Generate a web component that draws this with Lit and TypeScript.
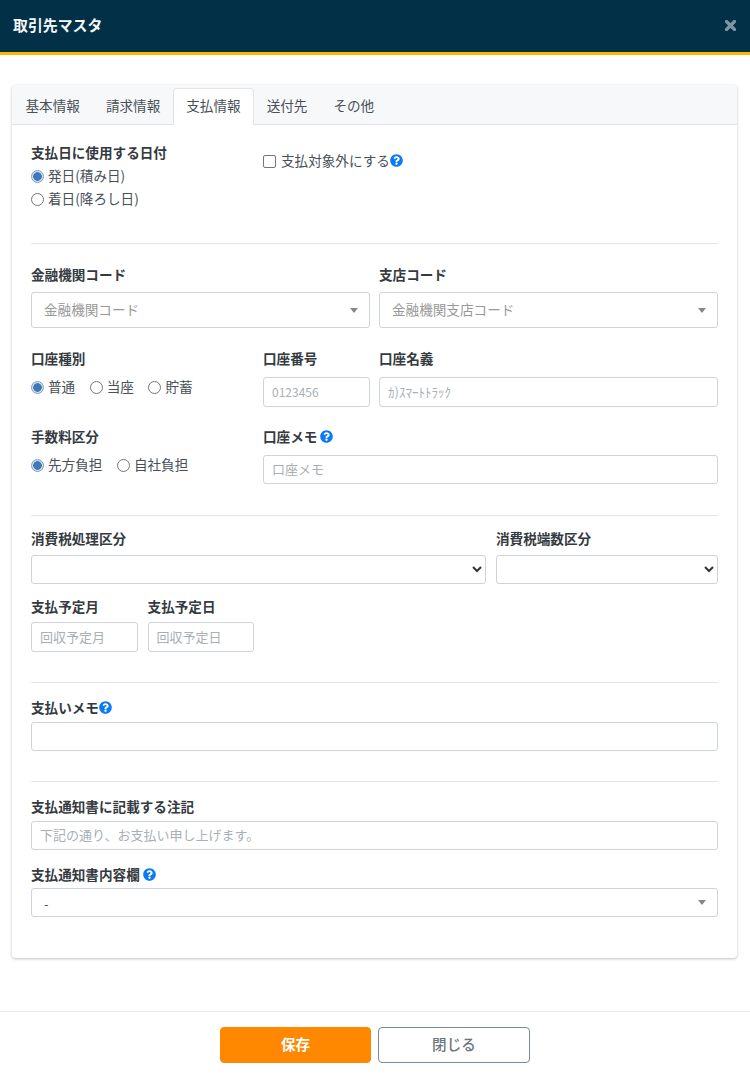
import { LitElement, html, css, svg } from "lit";
import { customElement } from "lit/decorators.js";

const helpPath =
  "M504 256c0 136.997-111.043 248-248 248S8 392.997 8 256C8 119.083 119.043 8 256 8s248 111.083 248 248zM262.655 90c-54.497 0-89.255 22.957-116.549 63.758-3.536 5.286-2.353 12.415 2.715 16.258l34.699 26.31c5.205 3.947 12.621 3.008 16.665-2.122 17.864-22.658 30.113-35.797 57.303-35.797 20.429 0 45.698 13.148 45.698 32.958 0 14.976-12.363 22.667-32.534 33.976C247.128 238.528 216 254.941 216 296v4c0 6.627 5.373 12 12 12h56c6.627 0 12-5.373 12-12v-1.333c0-28.462 83.186-29.647 83.186-106.667 0-58.002-60.165-102-116.531-102zM256 338c-25.365 0-46 20.635-46 46 0 25.364 20.635 46 46 46s46-20.636 46-46c0-25.365-20.635-46-46-46z";

const help = () => html`<svg class="help" viewBox="0 0 512 512" aria-hidden="true">${svg`<path fill="#0b7bf5" d=${helpPath}></path>`}</svg>`;

@customElement("app-root")
export class AppRoot extends LitElement {
  static styles = css`
    :host {
      display: flex;
      flex-direction: column;
      height: 1075px;
      background: #fff;
      font-family: "Noto Sans CJK JP", "Noto Sans", sans-serif;
      font-size: 13.6px;
      color: #495057;
    }
    * { box-sizing: border-box; }
    .header {
      height: 55px;
      flex: none;
      background: #023047;
      border-bottom: 3px solid #ffb703;
      display: flex;
      align-items: center;
      justify-content: space-between;
      padding: 0 14px 2px 13px;
    }
    .title { color: #f4f6f7; font-size: 14.9px; font-weight: 700; line-height: 20px; }
    .close { width: 11px; height: 11px; display: block; margin-top: 1px; }
    .main { flex: 1; padding: 30px 13px 0 12px; }
    .card {
      height: 873px;
      border-radius: 4px;
      background: #fff;
      box-shadow: 0 1px 3px rgba(0, 0, 0, 0.25);
    }
    .tabs {
      height: 40px;
      display: flex;
      align-items: flex-end;
      background: #f7f8fa;
      border-bottom: 1px solid #dee2e6;
      border-radius: 4px 4px 0 0;
      padding-left: 0.5px;
    }
    .tab {
      height: 36px;
      line-height: 30px;
      padding: 0 12px;
      color: #495057;
      border: 1px solid transparent;
      border-bottom: 0;
      margin-bottom: -1px;
      white-space: nowrap;
    }
    .tab.active {
      height: 37px;
      line-height: 32px;
      background: #fff;
      border-color: #e1e5ea;
      border-radius: 4px 4px 0 0;
    }
    .body { padding: 18px 19px 0; }
    .row {
      display: grid;
      grid-template-columns: repeat(12, 1fr);
      column-gap: 9px;
    }
    .row.tax { grid-template-columns: 1fr 222px; column-gap: 10px; }
    .row.due { grid-template-columns: 107px 106px; column-gap: 9.6px; }
    .c2 { grid-column: span 2; }
    .c4 { grid-column: span 4; }
    .c6 { grid-column: span 6; }
    .c8 { grid-column: span 8; }
    .c12 { grid-column: span 12; }
    .label {
      display: flex;
      align-items: center;
      gap: 3px;
      height: 20px;
      padding-bottom: 2px;
      line-height: 18px;
      font-weight: 700;
      color: #343a40;
      white-space: nowrap;
    }
    .label.tight { gap: 0; }
    .label.plain { font-weight: 400; color: #495057; gap: 0; padding-bottom: 0; }
    .help { width: 13px; height: 13px; flex: none; display: block; }
    .mb8 { margin-bottom: 8px; }
    .mb7 { margin-bottom: 7px; }
    .mb6 { margin-bottom: 6px; }
    .mb5 { margin-bottom: 5px; }
    .mb4 { margin-bottom: 4px; }
    .mb3 { margin-bottom: 3px; }
    .row1 { height: 67px; }
    .after21 { margin-bottom: 21px; }
    .after20 { margin-bottom: 20px; }
    .after13 { margin-bottom: 13px; }
    .after15 { margin-bottom: 15px; }
    hr { border: 0; height: 1px; background: #e3e6ea; margin: 0; }
    .hr1 { margin: 33px 0 21px; }
    .hr2 { margin: 31px 0 13px; }
    .hr3 { margin: 30px 0 15px; }
    .radios { display: flex; gap: 14.5px; height: 23px; align-items: center; }
    .opt { display: inline-flex; align-items: center; gap: 4px; line-height: 20px; white-space: nowrap; color: #495057; }
    .radio {
      width: 13px;
      height: 13px;
      border-radius: 50%;
      border: 1px solid #767676;
      background: #fff;
      flex: none;
      transform: translateY(2px);
    }
    .radio.on {
      border-color: #7b9fc4;
      background: radial-gradient(circle, #3f79b5 0 4px, #d6e2ef 4.6px);
    }
    .check {
      width: 13px;
      height: 13px;
      border: 1px solid #767676;
      border-radius: 2px;
      background: #fff;
      flex: none;
      transform: translateY(1px);
    }
    .checkrow { display: flex; align-items: center; height: 20px; margin-top: 7px; gap: 5px; color: #495057; white-space: nowrap; }
    .input, .fake-select, select {
      display: block;
      width: 100%;
      background: #fff;
      border: 1px solid #ced4da;
      border-radius: 3px;
      font-family: inherit;
      color: #495057;
    }
    .input {
      height: 30px;
      padding: 0 8px 2px;
      font-size: 13px;
      outline: none;
    }
    .input.short { height: 29px; }
    .input.num { font-size: 12px; }
    .input::placeholder { color: #a9afb5; opacity: 1; }
    .fake-select {
      height: 36px;
      padding: 0 11px 0 12px;
      display: flex;
      align-items: center;
      justify-content: space-between;
      color: #999;
      font-size: 13.6px;
    }
    .fake-select .txt { padding-bottom: 3px; }
    .fake-select.short { height: 29px; color: #495057; font-size: 12.8px; }
    .fake-select.short .txt { padding: 2px 0 0; }
    .tri {
      width: 0;
      height: 0;
      border-left: 4px solid transparent;
      border-right: 4px solid transparent;
      border-top: 5px solid #888;
      flex: none;
    }
    select { height: 29px; font-size: 12.8px; padding: 0 4px; color: #333; }
    .footer {
      flex: none;
      height: 64px;
      border-top: 1px solid #e9ecef;
      display: flex;
      justify-content: center;
      gap: 7px;
      padding: 15px 0 0 0;
    }
    .btn {
      width: 152px;
      height: 36px;
      font-family: inherit;
      font-size: 14.6px;
      font-weight: 500;
      border-radius: 4px;
      padding: 0 0 3px;
      background: #fff;
    }
    .save { width: 151px; background: #ff8800; border: 1px solid #ff8800; color: #fff; font-weight: 700; }
    .cancel { border: 1px solid #7d8a96; color: #6c757d; }
  `;

  private radio(text: string, on = false) {
    return html`<span class="opt"><span class=${on ? "radio on" : "radio"}></span>${text}</span>`;
  }

  render() {
    const tabs = ["基本情報", "請求情報", "支払情報", "送付先", "その他"];
    return html`
      <div class="header">
        <div class="title">取引先マスタ</div>
        <svg class="close" viewBox="0 0 11 11" aria-hidden="true">
          <path d="M1.5 1.5 9.5 9.5M9.5 1.5 1.5 9.5" stroke="#7f95a3" stroke-width="3.2" stroke-linecap="round"></path>
        </svg>
      </div>
      <div class="main">
        <div class="card">
          <div class="tabs">
            ${tabs.map((t, i) => html`<div class=${i === 2 ? "tab active" : "tab"}>${t}</div>`)}
          </div>
          <div class="body">
            <div class="row row1">
              <div class="c4">
                <div class="label">支払日に使用する日付</div>
                <div class="radios">${this.radio("発日(積み日)", true)}</div>
                <div class="radios">${this.radio("着日(降ろし日)")}</div>
              </div>
              <div class="c8">
                <div class="checkrow">
                  <span class="check"></span>
                  <span class="label plain">支払対象外にする${help()}</span>
                </div>
              </div>
            </div>
            <hr class="hr1" />
            <div class="row after21">
              <div class="c6">
                <div class="label mb7">金融機関コード</div>
                <div class="fake-select"><span class="txt">金融機関コード</span><span class="tri"></span></div>
              </div>
              <div class="c6">
                <div class="label mb7">支店コード</div>
                <div class="fake-select"><span class="txt">金融機関支店コード</span><span class="tri"></span></div>
              </div>
            </div>
            <div class="row after20">
              <div class="c4">
                <div class="label mb5">口座種別</div>
                <div class="radios">${this.radio("普通", true)}${this.radio("当座")}${this.radio("貯蓄")}</div>
              </div>
              <div class="c2">
                <div class="label mb8">口座番号</div>
                <input class="input num" placeholder="0123456" />
              </div>
              <div class="c6">
                <div class="label mb8">口座名義</div>
                <input class="input" placeholder="ｶ)ｽﾏｰﾄﾄﾗｯｸ" />
              </div>
            </div>
            <div class="row">
              <div class="c4">
                <div class="label mb5">手数料区分</div>
                <div class="radios">${this.radio("先方負担", true)}${this.radio("自社負担")}</div>
              </div>
              <div class="c8">
                <div class="label mb8">口座メモ${help()}</div>
                <input class="input short" placeholder="口座メモ" />
              </div>
            </div>
            <hr class="hr2" />
            <div class="row tax after13">
              <div>
                <div class="label mb6">消費税処理区分</div>
                <select></select>
              </div>
              <div>
                <div class="label mb6">消費税端数区分</div>
                <select></select>
              </div>
            </div>
            <div class="row due">
              <div>
                <div class="label mb5">支払予定月</div>
                <input class="input" placeholder="回収予定月" />
              </div>
              <div>
                <div class="label mb5">支払予定日</div>
                <input class="input" placeholder="回収予定日" />
              </div>
            </div>
            <hr class="hr3" />
            <div class="row">
              <div class="c12">
                <div class="label tight mb4">支払いメモ${help()}</div>
                <input class="input short" />
              </div>
            </div>
            <hr class="hr3" />
            <div class="row after15">
              <div class="c12">
                <div class="label mb4">支払通知書に記載する注記</div>
                <input class="input short" placeholder="下記の通り、お支払い申し上げます。" />
              </div>
            </div>
            <div class="row">
              <div class="c12">
                <div class="label mb3">支払通知書内容欄${help()}</div>
                <div class="fake-select short"><span class="txt">-</span><span class="tri"></span></div>
              </div>
            </div>
          </div>
        </div>
      </div>
      <div class="footer">
        <button class="btn save">保存</button>
        <button class="btn cancel">閉じる</button>
      </div>
    `;
  }
}
